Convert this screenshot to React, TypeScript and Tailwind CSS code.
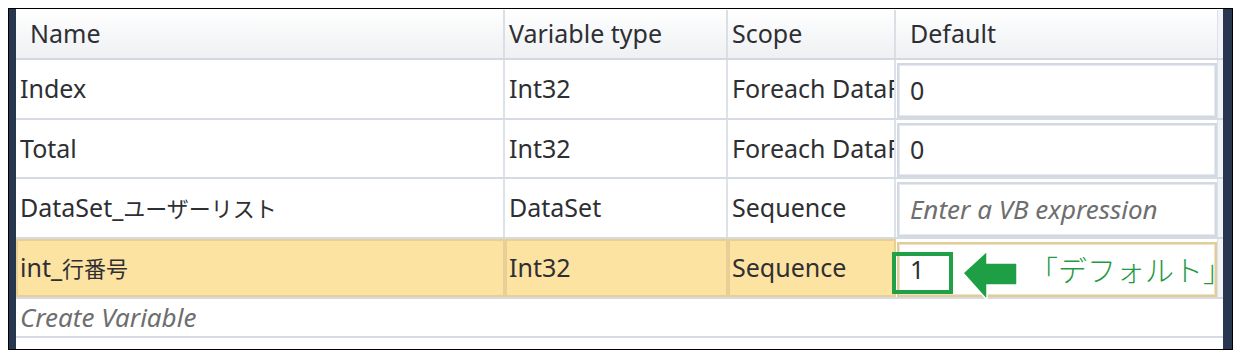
import { FC, ReactNode } from 'react';

type VarRow = {
  name: ReactNode;
  type: string;
  scope: string;
  def?: string;
  active?: boolean;
};

const Jp: FC<{ children: ReactNode }> = ({ children }) => (
  <span className="text-[22px]">{children}</span>
);

const rows: VarRow[] = [
  { name: 'Index', type: 'Int32', scope: 'Foreach DataRow', def: '0' },
  { name: 'Total', type: 'Int32', scope: 'Foreach DataRow', def: '0' },
  {
    name: (
      <>
        DataSet_<Jp>ユーザーリスト</Jp>
      </>
    ),
    type: 'DataSet',
    scope: 'Sequence',
  },
  {
    name: (
      <>
        int_<Jp>行番号</Jp>
      </>
    ),
    type: 'Int32',
    scope: 'Sequence',
    def: '1',
    active: true,
  },
];

const font = "font-['Noto_Sans','Noto_Sans_CJK_JP',sans-serif]";

const Row: FC<{ row: VarRow; h: string }> = ({ row, h }) => {
  const cell = row.active
    ? 'bg-[#fde3a2] border-2 border-[#e8cf96] pl-[2px]'
    : 'border-r-2 border-[#dde1e8] pl-1';
  return (
    <div
      className={`grid grid-cols-[489px_223px_168px_321px_6px] ${h} border-b-2 border-[#d6dbe3]`}
    >
      <div className={`${cell} flex items-center overflow-hidden whitespace-nowrap`}>
        {row.name}
      </div>
      <div className={`${cell} flex items-center overflow-hidden whitespace-nowrap`}>
        {row.type}
      </div>
      <div className={`${cell} flex items-center overflow-hidden whitespace-nowrap`}>
        {row.scope}
      </div>
      <div className="relative pt-[3px] pl-px">
        <div
          className={`h-full flex items-center pl-[11px] border-2 overflow-hidden whitespace-nowrap ${
            row.active
              ? 'border-[#e2cc98] shadow-[inset_0_0_0_1px_#efe3c4]'
              : 'border-[#d3d9e3] shadow-[inset_0_0_0_1px_#e6e9ef]'
          } bg-white`}
        >
          {row.def ? (
            <span>{row.def}</span>
          ) : (
            <span className="italic text-[#6e6e6e] text-[26px]">Enter a VB expression</span>
          )}
        </div>
        {row.active && (
          <>
            <div className="absolute left-[-4px] top-[13px] w-[61px] h-[42px] border-4 border-[#22a048]" />
            <svg
              className="absolute left-[64px] top-[9px]"
              width="60"
              height="56"
              viewBox="0 0 60 56"
            >
              <polygon
                points="3,25 27,3 27,15 57,15 57,37 27,37 27,52"
                fill="#1f9f45"
                stroke="#ffffff"
                strokeWidth="1.5"
              />
            </svg>
            <span className="absolute left-[133px] top-[14px] text-[29px] leading-[36px] font-light text-[#1f9a44] whitespace-nowrap">
              「デフォルト」
            </span>
          </>
        )}
      </div>
      <div className="bg-[#f2f4f7] border-l border-[#dde1e8]" />
    </div>
  );
};

export default function App() {
  return (
    <div className={`bg-white w-[1244px] h-[363px] pt-2 pl-2 ${font} text-[25px] text-[#2e2f33]`}>
      <div className="w-[1225px] h-[342px] border border-black flex">
        <div className="w-[7px] bg-[#29364f]" />
        <div className="w-[1207px] flex flex-col pt-px">
          <div className="grid grid-cols-[489px_223px_168px_321px_6px] h-[50px] bg-gradient-to-b from-[#ffffff] to-[#eef0f3] border-b-2 border-[#d4d9e1]">
            <div className="flex items-center pl-[14px] border-r-2 border-[#dadee5]">Name</div>
            <div className="flex items-center pl-1 border-r-2 border-[#dadee5]">Variable type</div>
            <div className="flex items-center pl-1 border-r-2 border-[#dadee5]">Scope</div>
            <div className="flex items-center pl-[14px]">Default</div>
            <div className="bg-[#f2f4f7] border-l border-[#dde1e8]" />
          </div>
          <Row row={rows[0]} h="h-[60px]" />
          <Row row={rows[1]} h="h-[59px]" />
          <Row row={rows[2]} h="h-[60px]" />
          <Row row={rows[3]} h="h-[60px]" />
          <div className="h-[39px] flex items-center pl-1 border-b-2 border-[#d6dbe3] italic text-[26px] text-[#6e6e6e]">
            Create Variable
          </div>
          <div className="flex-1" />
        </div>
        <div className="w-[9px] bg-[#29364f]" />
      </div>
    </div>
  );
}
